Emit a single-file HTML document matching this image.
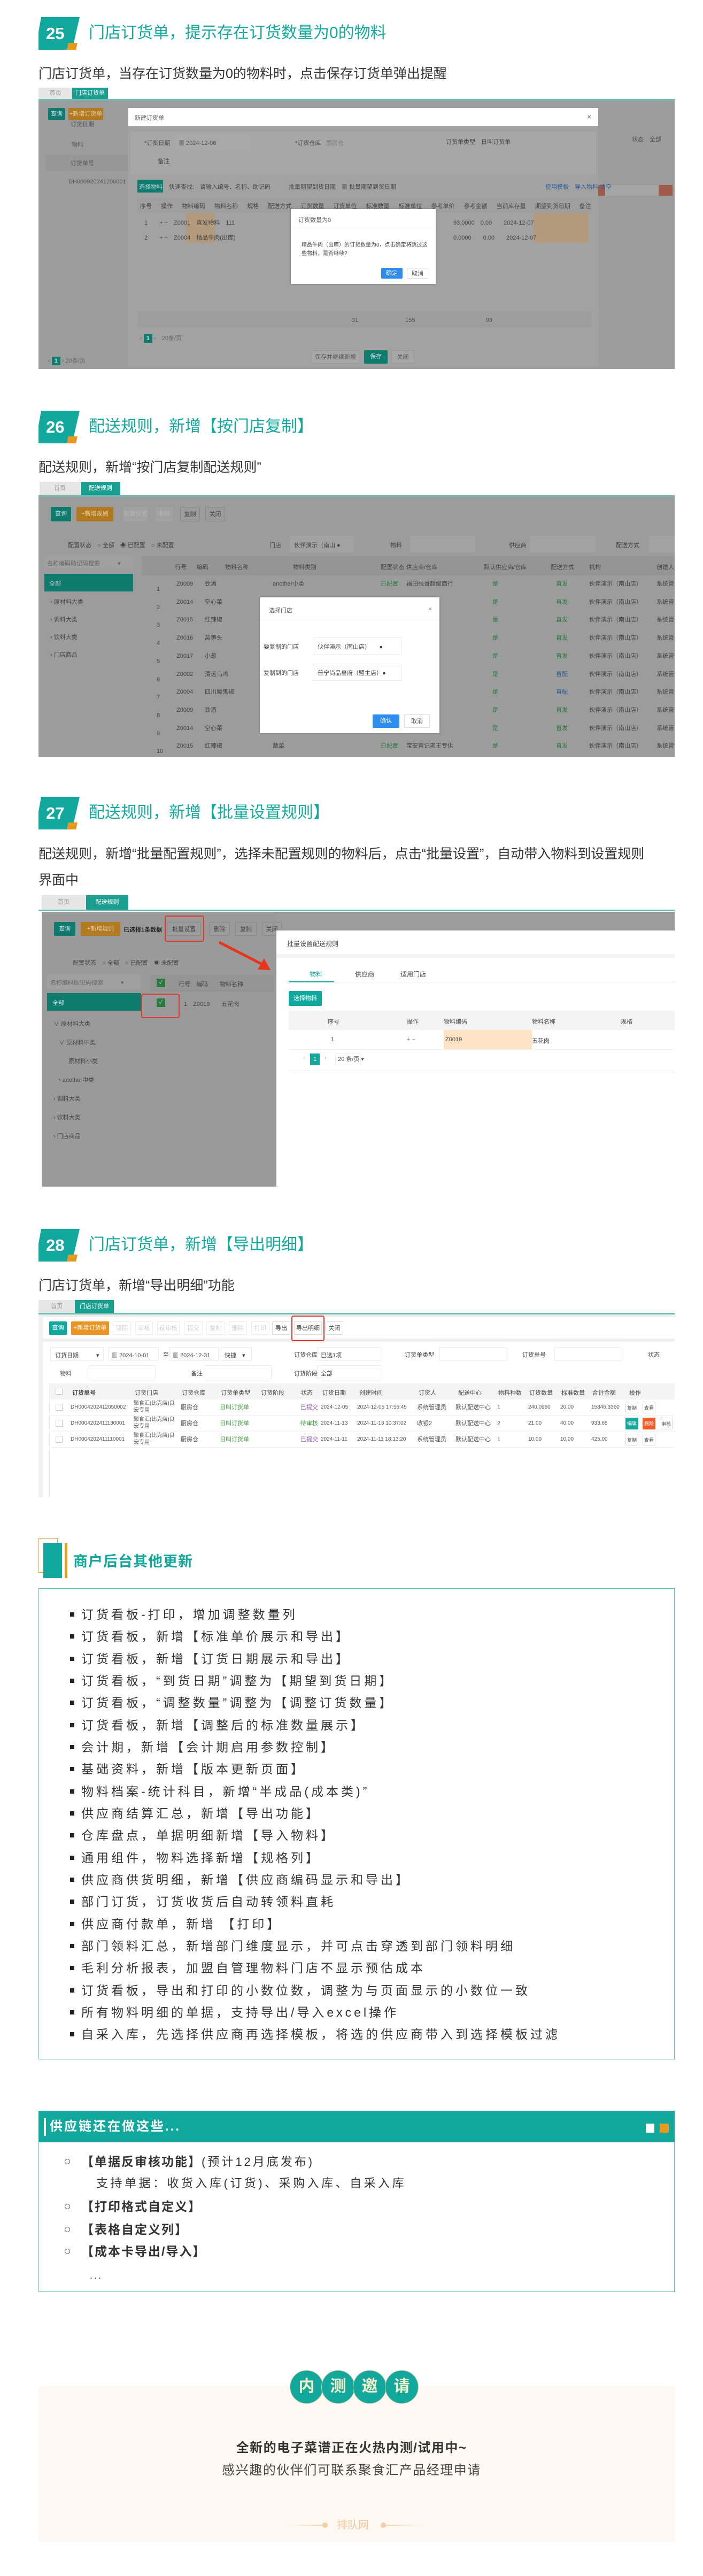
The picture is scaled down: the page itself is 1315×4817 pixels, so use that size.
<!DOCTYPE html>
<html><head><meta charset="utf-8">
<style>
*{margin:0;padding:0;box-sizing:border-box}
body{width:1315px;height:4817px;position:relative;background:#fff;font-family:"Liberation Sans","Noto Sans CJK SC",sans-serif;color:#333;overflow:hidden}
.a{position:absolute}
.num{position:absolute;width:78px;height:62px}
.num span{position:absolute;left:14px;top:13px;font-size:31px;font-weight:bold;color:#fff;line-height:36px}
.ttl{position:absolute;left:166px;font-size:30px;color:#13a89e;line-height:40px;white-space:nowrap}
.sub{position:absolute;left:72px;font-size:25px;color:#333;line-height:34px;white-space:nowrap}
.shot{position:absolute;left:72px;width:1190px;overflow:hidden;font-size:11px;color:#333}
.shot div,.shot span{position:absolute;white-space:nowrap}
.tab{height:24px;line-height:24px;text-align:center;font-size:11px}
.b{height:22px;line-height:22px;text-align:center;font-size:11px;border-radius:2px}
.li{position:absolute;left:131px;font-size:23px;letter-spacing:5px;color:#333;line-height:40px;white-space:nowrap}
.li:before{content:"";position:absolute;left:0;top:16px;width:8px;height:8px;background:#222}
.li span{position:static;margin-left:21px}
.ci{position:absolute;width:63px;height:63px;border-radius:50%;background:#13a89e;border:1px solid #d9cf9e;color:#f5f0c8;font-size:30px;font-weight:bold;text-align:center;line-height:60px}
</style></head><body>

<!-- ===== 25 ===== -->
<svg class="num" style="left:72px;top:32px" viewBox="0 0 78 62"><polygon points="5,0 77,0 66,48 56,48 53,61 0,61 0,28" fill="#13a89e"/><polygon points="56,48 73,48 70,61 53,61" fill="#e8981a"/></svg>
<div class="num" style="left:72px;top:32px;background:none"><span>25</span></div>
<div class="ttl" style="top:42px">门店订货单，提示存在订货数量为0的物料</div>
<div class="sub" style="top:121px">门店订货单，当存在订货数量为0的物料时，点击保存订货单弹出提醒</div>

<div class="shot" style="top:164px;height:526px;background:#fff">
 <div class="tab" style="left:0;top:0;width:63px;height:21px;line-height:21px;background:#e6e6e6;color:#999">首页</div>
 <div class="tab" style="left:63px;top:0;width:67px;height:21px;line-height:21px;background:#1a9e8f;color:#fff">门店订货单</div>
 <div style="left:0;top:21px;width:1190px;height:3px;background:#6cbcb2"></div>
 <div style="left:0;top:24px;width:1190px;height:502px;background:#9c9c9c"></div>
 <div class="b" style="left:18px;top:38px;width:32px;background:#0f7a6e;color:#cde">查询</div>
 <div class="b" style="left:56px;top:38px;width:65px;background:#b27a1f;color:#e8d0a8">+新增订货单</div>
 <div style="left:60px;top:60px;color:#555">订货日期</div>
 <div style="left:62px;top:98px;color:#555">物料</div>
 <div style="left:14px;top:126px;width:160px;height:30px;background:#979797"></div>
 <div style="left:60px;top:133px;color:#555">订货单号</div>
 <div style="left:56px;top:170px;color:#555">DH000920241206001</div>
 <div style="left:1110px;top:88px;color:#555">状态　全部</div>
 <div style="left:1046px;top:182px;width:140px;height:20px;background:#a05a4a"></div>
 <div style="left:1060px;top:182px;width:100px;height:20px;background:#a5a5a5"></div>
 <div style="left:18px;top:502px;color:#666">‹ <b style="background:#0f7a6e;color:#cde;padding:2px 5px">1</b> › 20条/页</div>
 <!-- modal -->
 <div style="left:168px;top:38px;width:879px;height:484px;background:#a2a2a2">
  <div style="left:0;top:0;width:879px;height:34px;background:#fff"></div>
  <div style="left:12px;top:10px;color:#555">新建订货单</div>
  <div style="left:858px;top:8px;color:#666;font-size:14px">×</div>
  <div style="left:4px;top:44px;width:871px;height:80px;background:#a7a7a7"></div>
  <div style="left:30px;top:57px;color:#444">*订货日期</div>
  <div style="left:88px;top:50px;width:140px;height:28px;background:#a9a9a9"></div>
  <div style="left:94px;top:57px;color:#555">▥ 2024-12-06</div>
  <div style="left:312px;top:57px;color:#444">*订货仓库</div>
  <div style="left:370px;top:57px;color:#777">厨房仓</div>
  <div style="left:594px;top:55px;color:#444">订货单类型　日叫订货单</div>
  <div style="left:55px;top:91px;color:#444">备注</div>
  <div style="left:17px;top:134px;width:48px;height:24px;background:#0f7a6e"></div>
  <div style="left:20px;top:139px;color:#bdd">选择物料</div>
  <div style="left:76px;top:139px;color:#444">快速查找:　请输入编号、名称、助记码</div>
  <div style="left:300px;top:139px;color:#444">批量期望到货日期　▥ 批量期望到货日期</div>
  <div style="left:780px;top:139px;color:#2e5f98">使用模板　导入物料 清空</div>
  <div style="left:17px;top:168px;width:850px;height:28px;background:#9f9f9f"></div>
  <div style="left:22px;top:175px;color:#444;word-spacing:14px">序号 操作 物料编码 物料名称 规格 配送方式 订货数量 订货单位 标准数量 标准单位 参考单价 参考金额 当前库存量 期望到货日期 备注</div>
  <div style="left:108px;top:196px;width:54px;height:56px;background:#b49a7c"></div>
  <div style="left:758px;top:196px;width:102px;height:56px;background:#b49a7c"></div>
  <div style="left:30px;top:206px;color:#444">1　　+ −　Z0001　直发物料　111</div>
  <div style="left:30px;top:234px;color:#444">2　　+ −　Z0004　精品牛肉(出库)</div>
  <div style="left:608px;top:206px;color:#444">93.0000　0.00　　2024-12-07</div>
  <div style="left:608px;top:234px;color:#444">0.0000　　0.00　　2024-12-07</div>
  <div style="left:17px;top:380px;width:850px;height:30px;background:#9e9e9e"></div>
  <div style="left:418px;top:388px;color:#555">31　　　　　　　　155　　　　　　　　　　　　93</div>
  <div style="left:22px;top:422px;color:#666">‹ <b style="background:#0f7a6e;color:#cde;padding:2px 5px">1</b> ›　20条/页</div>
  <div class="b" style="left:343px;top:453px;width:89px;height:25px;line-height:25px;background:#a7a7a7;border:1px solid #999;color:#555">保存并继续新增</div>
  <div class="b" style="left:441px;top:453px;width:44px;height:25px;line-height:25px;background:#0f7a6e;color:#cde">保存</div>
  <div class="b" style="left:492px;top:453px;width:43px;height:25px;line-height:25px;background:#a7a7a7;border:1px solid #999;color:#555">关闭</div>
 </div>
 <!-- confirm -->
 <div style="left:472px;top:227px;width:271px;height:140px;background:#fff;box-shadow:0 0 4px rgba(0,0,0,.3)">
  <div style="left:14px;top:12px;color:#555">订货数量为0</div>
  <div style="left:0;top:33px;width:271px;height:1px;background:#eee"></div>
  <div style="left:20px;top:58px;color:#444;font-size:10px">精品牛肉（出库）的订货数量为0，点击确定将跳过这</div>
  <div style="left:20px;top:74px;color:#444;font-size:10px">些物料，是否继续?</div>
  <div class="b" style="left:169px;top:110px;width:40px;height:20px;line-height:20px;background:#2d8cf0;color:#fff">确定</div>
  <div class="b" style="left:217px;top:110px;width:40px;height:20px;line-height:20px;border:1px solid #ddd;color:#555">取消</div>
 </div>
</div>

<!-- ===== 26 ===== -->
<svg class="num" style="left:72px;top:768px" viewBox="0 0 78 62"><polygon points="5,0 77,0 66,48 56,48 53,61 0,61 0,28" fill="#13a89e"/><polygon points="56,48 73,48 70,61 53,61" fill="#e8981a"/></svg>
<div class="num" style="left:72px;top:768px"><span>26</span></div>
<div class="ttl" style="top:778px">配送规则，新增【按门店复制】</div>
<div class="sub" style="top:857px">配送规则，新增“按门店复制配送规则”</div>

<div class="shot" style="top:901px;height:515px;background:#fff">
 <div class="tab" style="left:2px;top:0;width:76px;height:25px;background:#e6e6e6;color:#999">首页</div>
 <div class="tab" style="left:79px;top:0;width:74px;height:25px;background:#1a9e8f;color:#fff">配送规则</div>
 <div style="left:0;top:25px;width:1190px;height:3px;background:#6cbcb2"></div>
 <div style="left:0;top:28px;width:1190px;height:487px;background:#9c9c9c"></div>
 <div class="b" style="left:23px;top:47px;width:38px;height:27px;line-height:27px;background:#0f7a6e;color:#cde">查询</div>
 <div class="b" style="left:71px;top:47px;width:69px;height:27px;line-height:27px;background:#b27a1f;color:#e8d0a8">+新增规则</div>
 <div class="b" style="left:158px;top:47px;width:47px;height:27px;line-height:27px;background:#a1a1a1;color:#b5b5b5">批量设置</div>
 <div class="b" style="left:218px;top:47px;width:34px;height:27px;line-height:27px;background:#a1a1a1;color:#b5b5b5">删除</div>
 <div class="b" style="left:265px;top:47px;width:37px;height:27px;line-height:27px;border:1px solid #888;color:#444">复制</div>
 <div class="b" style="left:312px;top:47px;width:37px;height:27px;line-height:27px;border:1px solid #888;color:#444">关闭</div>
 <div style="left:55px;top:110px;color:#444">配置状态　○ 全部　◉ 已配置　○ 未配置</div>
 <div style="left:432px;top:110px;color:#444">门店</div>
 <div style="left:470px;top:100px;width:120px;height:32px;background:#a2a2a2"></div>
 <div style="left:478px;top:110px;color:#444">伙伴演示（南山 ●</div>
 <div style="left:658px;top:110px;color:#444">物料</div>
 <div style="left:695px;top:100px;width:122px;height:32px;background:#a2a2a2"></div>
 <div style="left:880px;top:110px;color:#444">供应商</div>
 <div style="left:920px;top:100px;width:122px;height:32px;background:#a2a2a2"></div>
 <div style="left:1080px;top:110px;color:#444">配送方式</div>
 <div style="left:1142px;top:100px;width:48px;height:32px;background:#a2a2a2"></div>
 <div style="left:11px;top:138px;width:165px;height:24px;background:#a0a0a0"></div>
 <div style="left:16px;top:144px;color:#666">名称编码助记码搜索　　　▾</div>
 <div style="left:11px;top:172px;width:166px;height:33px;background:#0f7a6e"></div>
 <div style="left:20px;top:182px;color:#cde">全部</div>
 <div style="left:22px;top:216px;color:#444">› 原材料大类</div>
 <div style="left:22px;top:249px;color:#444">› 调料大类</div>
 <div style="left:22px;top:282px;color:#444">› 饮料大类</div>
 <div style="left:22px;top:315px;color:#444">› 门店商品</div>
 <div style="left:193px;top:139px;width:997px;height:36px;background:#959595"></div>
 <div style="left:255px;top:151px;color:#444">行号</div><div style="left:296px;top:151px;color:#444">编码</div><div style="left:349px;top:151px;color:#444">物料名称</div><div style="left:476px;top:151px;color:#444">物料类别</div><div style="left:640px;top:151px;color:#444">配置状态</div><div style="left:688px;top:151px;color:#444">供应商/仓库</div><div style="left:833px;top:151px;color:#444">默认供应商/仓库</div><div style="left:958px;top:151px;color:#444">配送方式</div><div style="left:1030px;top:151px;color:#444">机构</div><div style="left:1156px;top:151px;color:#444">创建人</div>
</div>
<div class="shot" id="t26" style="top:1076px;height:340px;left:72px"></div>

<!-- ===== 27 ===== -->
<svg class="num" style="left:72px;top:1490px" viewBox="0 0 78 62"><polygon points="5,0 77,0 66,48 56,48 53,61 0,61 0,28" fill="#13a89e"/><polygon points="56,48 73,48 70,61 53,61" fill="#e8981a"/></svg>
<div class="num" style="left:72px;top:1490px"><span>27</span></div>
<div class="ttl" style="top:1500px">配送规则，新增【批量设置规则】</div>
<div class="sub" style="top:1580px">配送规则，新增“批量配置规则”，选择未配置规则的物料后，点击“批量设置”，自动带入物料到设置规则</div>
<div class="sub" style="top:1629px">界面中</div>

<div class="shot" style="top:1674px;height:545px;background:#fff">
 <div class="tab" style="left:6px;top:0;width:82px;height:27px;line-height:27px;background:#e6e6e6;color:#999">首页</div>
 <div class="tab" style="left:89px;top:0;width:79px;height:27px;line-height:27px;background:#1a9e8f;color:#fff">配送规则</div>
 <div style="left:0;top:27px;width:1190px;height:3px;background:#6cbcb2"></div>
 <div style="left:6px;top:31px;width:1184px;height:514px;background:#9c9c9c"></div>
 <div style="left:6px;top:31px;width:439px;height:514px;background:#9a9a9a"></div>
 <div class="b" style="left:29px;top:50px;width:40px;height:26px;line-height:26px;background:#0f7a6e;color:#cde">查询</div>
 <div class="b" style="left:79px;top:50px;width:74px;height:26px;line-height:26px;background:#b27a1f;color:#e8d0a8">+新增规则</div>
 <div style="left:159px;top:56px;color:#222;font-weight:bold">已选择1条数据</div>
 <div class="b" style="left:240px;top:50px;width:64px;height:26px;line-height:26px;border:1px solid #888;color:#444">批量设置</div>
 <div class="b" style="left:319px;top:50px;width:39px;height:26px;line-height:26px;border:1px solid #888;color:#444">删除</div>
 <div class="b" style="left:368px;top:50px;width:40px;height:26px;line-height:26px;border:1px solid #888;color:#444">复制</div>
 <div class="b" style="left:418px;top:50px;width:37px;height:26px;line-height:26px;border:1px solid #888;color:#444">关闭</div>
 <div style="left:236px;top:38px;width:74px;height:49px;border:2px solid #e0392b;border-radius:4px"></div>
 <div style="left:64px;top:118px;color:#444">配置状态　○ 全部　○ 已配置　◉ 未配置</div>
 <div style="left:16px;top:148px;width:175px;height:28px;background:#a0a0a0"></div>
 <div style="left:22px;top:155px;color:#666">名称编码助记码搜索　　　▾</div>
 <div style="left:16px;top:183px;width:176px;height:33px;background:#0f7a6e"></div>
 <div style="left:26px;top:193px;color:#cde">全部</div>
 <div style="left:28px;top:232px;color:#444">∨ 原材料大类</div>
 <div style="left:38px;top:267px;color:#444">∨ 原材料中类</div>
 <div style="left:56px;top:302px;color:#444">原材料小类</div>
 <div style="left:38px;top:337px;color:#444">› another中类</div>
 <div style="left:28px;top:372px;color:#444">› 调料大类</div>
 <div style="left:28px;top:407px;color:#444">› 饮料大类</div>
 <div style="left:28px;top:442px;color:#444">› 门店商品</div>
 <div style="left:208px;top:149px;width:237px;height:32px;background:#959595"></div>
 <div style="left:221px;top:156px;width:16px;height:16px;background:#2a7a40;color:#ccc;font-size:10px;text-align:center;line-height:16px">✓</div>
 <div style="left:262px;top:158px;color:#444">行号　编码　　物料名称</div>
 <div style="left:221px;top:193px;width:16px;height:16px;background:#2a7a40;color:#ccc;font-size:10px;text-align:center;line-height:16px">✓</div>
 <div style="left:272px;top:195px;color:#444">1　Z0019　　五花肉</div>
 <div style="left:192px;top:184px;width:72px;height:46px;border:2px solid #e0392b;border-radius:4px"></div>
 <svg style="position:absolute;left:330px;top:82px" width="112" height="64"><line x1="8" y1="6" x2="90" y2="48" stroke="#e8341c" stroke-width="5"/><polygon points="104,58 80,57 92,36" fill="#e8341c"/></svg>
 <div style="left:445px;top:66px;width:745px;height:479px;background:#fff">
  <div style="left:20px;top:16px;color:#444;font-size:12px">批量设置配送规则</div>
  <div style="left:0;top:44px;width:745px;height:8px;background:#f3f3f3"></div>
  <div style="left:62px;top:73px;color:#13a89e;font-size:12px">物料</div>
  <div style="left:147px;top:73px;color:#444;font-size:12px">供应商</div>
  <div style="left:232px;top:73px;color:#444;font-size:12px">适用门店</div>
  <div style="left:23px;top:96px;width:722px;height:1px;background:#e8e8e8"></div>
  <div style="left:23px;top:95px;width:85px;height:2px;background:#13a89e"></div>
  <div class="b" style="left:23px;top:113px;width:62px;height:28px;line-height:28px;background:#13a89e;color:#fff">选择物料</div>
  <div style="left:23px;top:150px;width:722px;height:36px;background:#f4f4f4"></div>
  <div style="left:96px;top:162px;color:#444">序号</div><div style="left:244px;top:162px;color:#444">操作</div><div style="left:313px;top:162px;color:#444">物料编码</div><div style="left:478px;top:162px;color:#444">物料名称</div><div style="left:644px;top:162px;color:#444">规格</div>
  <div style="left:313px;top:186px;width:165px;height:36px;background:#fde2c4"></div>
  <div style="left:102px;top:198px;color:#444">1</div><div style="left:244px;top:198px;color:#888">+ −</div><div style="left:316px;top:198px;color:#444">Z0019</div><div style="left:478px;top:198px;color:#444">五花肉</div>
  <div style="left:23px;top:222px;width:722px;height:1px;background:#eee"></div>
  <div style="left:50px;top:232px;color:#aaa">‹</div>
  <div style="left:63px;top:230px;width:18px;height:22px;background:#13a89e;color:#fff;text-align:center;line-height:22px">1</div>
  <div style="left:90px;top:232px;color:#aaa">›</div>
  <div style="left:110px;top:230px;width:48px;height:22px;border:1px solid #eee;color:#555;line-height:20px;padding-left:4px">20 条/页 ▾</div>
  <div style="left:23px;top:262px;width:722px;height:1px;background:#e8e8e8"></div>
 </div>
</div>

<!-- ===== 28 ===== -->
<svg class="num" style="left:72px;top:2298px" viewBox="0 0 78 62"><polygon points="5,0 77,0 66,48 56,48 53,61 0,61 0,28" fill="#13a89e"/><polygon points="56,48 73,48 70,61 53,61" fill="#e8981a"/></svg>
<div class="num" style="left:72px;top:2298px"><span>28</span></div>
<div class="ttl" style="top:2308px">门店订货单，新增【导出明细】</div>
<div class="sub" style="top:2387px">门店订货单，新增“导出明细”功能</div>

<div class="shot" style="top:2431px;height:369px;background:#f0f0f0">
 <div class="tab" style="left:0;top:0;width:68px;height:24px;background:#e6e6e6;color:#999">首页</div>
 <div class="tab" style="left:68px;top:0;width:73px;height:24px;background:#1a9e8f;color:#fff">门店订货单</div>
 <div style="left:141px;top:0;width:1049px;height:24px;background:#fff"></div>
 <div style="left:0;top:24px;width:1190px;height:3px;background:#6cbcb2"></div>
 <div style="left:8px;top:32px;width:1182px;height:40px;background:#fff"></div>
 <div class="b" style="left:20px;top:40px;width:33px;height:25px;line-height:25px;background:#13a89e;color:#fff">查询</div>
 <div class="b" style="left:61px;top:40px;width:71px;height:25px;line-height:25px;background:#ea9424;color:#fff">+新增订货单</div>
 <div class="b" style="left:139px;top:40px;width:34px;height:25px;line-height:25px;border:1px solid #eee;color:#ccc">驳回</div>
 <div class="b" style="left:181px;top:40px;width:33px;height:25px;line-height:25px;border:1px solid #eee;color:#ccc">审核</div>
 <div class="b" style="left:222px;top:40px;width:42px;height:25px;line-height:25px;border:1px solid #eee;color:#ccc">反审核</div>
 <div class="b" style="left:272px;top:40px;width:35px;height:25px;line-height:25px;border:1px solid #eee;color:#ccc">提交</div>
 <div class="b" style="left:314px;top:40px;width:35px;height:25px;line-height:25px;border:1px solid #eee;color:#ccc">复制</div>
 <div class="b" style="left:356px;top:40px;width:34px;height:25px;line-height:25px;border:1px solid #eee;color:#ccc">删除</div>
 <div class="b" style="left:398px;top:40px;width:34px;height:25px;line-height:25px;border:1px solid #eee;color:#ccc">打印</div>
 <div class="b" style="left:437px;top:40px;width:34px;height:25px;line-height:25px;border:1px solid #ddd;color:#444">导出</div>
 <div class="b" style="left:478px;top:40px;width:52px;height:25px;line-height:25px;border:1px solid #ddd;color:#444">导出明细</div>
 <div class="b" style="left:537px;top:40px;width:33px;height:25px;line-height:25px;border:1px solid #ddd;color:#444">关闭</div>
 <div style="left:473px;top:29px;width:62px;height:48px;border:2px solid #e0392b;border-radius:4px"></div>
 <div style="left:8px;top:78px;width:1182px;height:291px;background:#fff"></div>
 <div style="left:22px;top:88px;width:100px;height:26px;border:1px solid #eee;padding:6px 8px;color:#444">订货日期　　　▾</div>
 <div style="left:130px;top:88px;width:95px;height:26px;border:1px solid #eee;padding:6px 6px;color:#444">▥ 2024-10-01</div>
 <div style="left:233px;top:94px;color:#444">至</div>
 <div style="left:244px;top:88px;width:93px;height:26px;border:1px solid #eee;padding:6px 6px;color:#444">▥ 2024-12-31</div>
 <div style="left:341px;top:88px;width:58px;height:26px;border:1px solid #eee;padding:6px 6px;color:#444">快捷　▾</div>
 <div style="left:478px;top:94px;color:#444">订货仓库</div>
 <div style="left:521px;top:88px;width:120px;height:26px;border:1px solid #eee;padding:6px 6px;color:#444">已选1项</div>
 <div style="left:685px;top:94px;color:#444">订货单类型</div>
 <div style="left:750px;top:88px;width:125px;height:26px;border:1px solid #eee"></div>
 <div style="left:905px;top:94px;color:#444">订货单号</div>
 <div style="left:965px;top:88px;width:125px;height:26px;border:1px solid #eee"></div>
 <div style="left:1140px;top:94px;color:#444">状态</div>
 <div style="left:40px;top:129px;color:#444">物料</div>
 <div style="left:94px;top:122px;width:125px;height:26px;border:1px solid #eee"></div>
 <div style="left:285px;top:129px;color:#444">备注</div>
 <div style="left:311px;top:122px;width:125px;height:26px;border:1px solid #eee"></div>
 <div style="left:478px;top:129px;color:#444">订货阶段</div>
 <div style="left:521px;top:122px;width:120px;height:26px;border:1px solid #eee;padding:6px 6px;color:#444">全部</div>
 <div style="left:20px;top:156px;width:1170px;height:30px;background:#f4f4f4"></div>
 <div style="left:20px;top:186px;width:1170px;height:90px;border-bottom:1px solid #eee"></div>
 <div style="left:20px;top:216px;width:1170px;height:1px;background:#eee"></div>
 <div style="left:20px;top:246px;width:1170px;height:1px;background:#eee"></div>
 <div style="left:20px;top:156px;width:1px;height:213px;background:#eee"></div>
</div>
<div class="shot" id="t28" style="top:2587px;height:120px"></div>

<!-- ===== Other updates ===== -->
<div class="a" style="left:72px;top:2876px;width:36px;height:65px;border:1px solid #e8a33c"></div>
<div class="a" style="left:81px;top:2885px;width:35px;height:66px;background:#13a89e"></div>
<div class="a" style="left:121px;top:2885px;width:5px;height:66px;background:#e8981a"></div>
<div class="a" style="left:137px;top:2898px;font-size:27px;font-weight:bold;color:#13a89e;letter-spacing:1px;white-space:nowrap">商户后台其他更新</div>
<div class="a" style="left:72px;top:2970px;width:1190px;height:881px;border:1px solid #5cbcb2"></div>
<div id="lst"></div>

<!-- ===== Supply chain ===== -->
<div class="a" style="left:72px;top:3947px;width:1190px;height:339px;border:1px solid #5cbcb2"></div>
<div class="a" style="left:72px;top:3947px;width:1190px;height:59px;background:#13a89e"></div>
<div class="a" style="left:82px;top:3961px;width:4px;height:33px;background:#fff"></div>
<div class="a" style="left:93px;top:3961px;font-size:24px;font-weight:bold;color:#fff;letter-spacing:3px;white-space:nowrap;line-height:32px">供应链还在做这些...</div>
<div class="a" style="left:1208px;top:3971px;width:16px;height:17px;background:#fff"></div>
<div class="a" style="left:1234px;top:3971px;width:17px;height:17px;background:#e8981a"></div>
<div class="a" style="left:121px;top:4037px;width:10px;height:10px;border:1px solid #555;border-radius:50%"></div>
<div class="a" style="left:152px;top:4024px;font-size:23px;letter-spacing:2px;white-space:nowrap;line-height:36px;color:#333"><b>【单据反审核功能】</b><span style="letter-spacing:4px;font-size:22px">(预计12月底发布)</span></div>
<div class="a" style="left:180px;top:4065px;font-size:22px;letter-spacing:4.5px;white-space:nowrap;line-height:36px;color:#333">支持单据：收货入库(订货)、采购入库、自采入库</div>
<div class="a" style="left:121px;top:4121px;width:10px;height:10px;border:1px solid #555;border-radius:50%"></div>
<div class="a" style="left:152px;top:4108px;font-size:23px;letter-spacing:2px;font-weight:bold;white-space:nowrap;line-height:36px">【打印格式自定义】</div>
<div class="a" style="left:121px;top:4164px;width:10px;height:10px;border:1px solid #555;border-radius:50%"></div>
<div class="a" style="left:152px;top:4151px;font-size:23px;letter-spacing:2px;font-weight:bold;white-space:nowrap;line-height:36px">【表格自定义列】</div>
<div class="a" style="left:121px;top:4205px;width:10px;height:10px;border:1px solid #555;border-radius:50%"></div>
<div class="a" style="left:152px;top:4192px;font-size:23px;letter-spacing:2px;font-weight:bold;white-space:nowrap;line-height:36px">【成本卡导出/导入】</div>
<div class="a" style="left:168px;top:4240px;font-size:18px;letter-spacing:3px;line-height:30px">...</div>

<!-- ===== Invite ===== -->
<div class="a" style="left:72px;top:4462px;width:1190px;height:291px;background:#fdf8f2"></div>
<div class="ci" style="left:542px;top:4432px">内</div>
<div class="ci" style="left:601px;top:4432px">测</div>
<div class="ci" style="left:660px;top:4432px">邀</div>
<div class="ci" style="left:720px;top:4432px">请</div>
<div class="a" style="left:0;width:1315px;top:4562px;text-align:center;font-size:24px;font-weight:bold;letter-spacing:1.5px;color:#333;line-height:32px">全新的电子菜谱正在火热内测/试用中~</div>
<div class="a" style="left:0;width:1315px;top:4604px;text-align:center;font-size:24px;letter-spacing:1.5px;color:#444;line-height:32px">感兴趣的伙伴们可联系聚食汇产品经理申请</div>
<div class="a" style="left:540px;top:4721px;width:68px;height:2px;background:linear-gradient(90deg,#fdf8f2,#f3cfa3)"></div>
<div class="a" style="left:603px;top:4717px;width:10px;height:10px;border-radius:50%;background:#f3cfa3"></div>
<div class="a" style="left:630px;top:4708px;font-size:20px;color:#f0c99c;line-height:28px">排队网</div>
<div class="a" style="left:712px;top:4717px;width:10px;height:10px;border-radius:50%;background:#f3cfa3"></div>
<div class="a" style="left:717px;top:4721px;width:73px;height:2px;background:linear-gradient(90deg,#f3cfa3,#fdf8f2)"></div>

<!-- static content for table 26 rows -->
<div class="shot" style="top:1076px;height:340px">
 <div style="left:193px;top:0;width:997px;height:340px">
  <div style="left:28px;top:10px;color:#444;line-height:33.7px;white-space:pre">1
2
3
4
5
6
7
8
9
10</div>
  <div style="left:65px;top:0;color:#444;line-height:33.7px;white-space:pre">Z0009
Z0014
Z0015
Z0016
Z0017
Z0002
Z0004
Z0009
Z0014
Z0015</div>
  <div style="left:118px;top:0;color:#444;line-height:33.7px;white-space:pre">劲酒
空心菜
红辣椒
莴笋头
小葱
清远乌鸡
四川魔鬼椒
劲酒
空心菜
红辣椒</div>
  <div style="left:245px;top:0;color:#444;line-height:33.7px">another小类</div>
  <div style="left:245px;top:303px;color:#444;line-height:33.7px">蔬菜</div>
  <div style="left:447px;top:0;color:#2a7a40;line-height:33.7px;white-space:pre">已配置</div>
  <div style="left:447px;top:303px;color:#2a7a40;line-height:33.7px">已配置</div>
  <div style="left:495px;top:0;color:#444;line-height:33.7px">福田强哥超级商行</div>
  <div style="left:495px;top:303px;color:#444;line-height:33.7px">宝安黄记老王专供</div>
  <div style="left:656px;top:0;color:#2a7a40;line-height:33.7px;white-space:pre">是
是
是
是
是
是
是
是
是
是</div>
  <div style="left:775px;top:0;color:#2a7a40;line-height:33.7px;white-space:pre">直发
直发
直发
直发
直发
<span style="position:static;color:#2e5f98">直配</span>
<span style="position:static;color:#2e5f98">直配</span>
直发
直发
直发</div>
  <div style="left:837px;top:0;color:#444;line-height:33.7px;white-space:pre">伙伴演示（南山店）
伙伴演示（南山店）
伙伴演示（南山店）
伙伴演示（南山店）
伙伴演示（南山店）
伙伴演示（南山店）
伙伴演示（南山店）
伙伴演示（南山店）
伙伴演示（南山店）
伙伴演示（南山店）</div>
  <div style="left:963px;top:0;color:#444;line-height:33.7px;white-space:pre">系统管
系统管
系统管
系统管
系统管
系统管
系统管
系统管
系统管
系统管</div>
 </div>
 <!-- dialog -->
 <div style="left:414px;top:41px;width:336px;height:254px;background:#fff;box-shadow:0 0 4px rgba(0,0,0,.3)">
  <div style="left:17px;top:16px;color:#555">选择门店</div>
  <div style="left:315px;top:14px;color:#999;font-size:13px">×</div>
  <div style="left:0;top:42px;width:336px;height:1px;background:#eee"></div>
  <div style="left:7px;top:84px;color:#444">要复制的门店</div>
  <div style="left:99px;top:75px;width:167px;height:32px;border:1px solid #eee;padding:8px 8px;color:#444">伙伴演示（南山店）　　●</div>
  <div style="left:7px;top:133px;color:#444">复制到的门店</div>
  <div style="left:99px;top:124px;width:167px;height:32px;border:1px solid #eee;padding:8px 8px;color:#444">普宁尚品皇府（盟主店）●</div>
  <div class="b" style="left:211px;top:219px;width:50px;height:25px;line-height:25px;background:#2d8cf0;color:#fff">确认</div>
  <div class="b" style="left:270px;top:219px;width:48px;height:25px;line-height:25px;border:1px solid #ddd;color:#555">取消</div>
 </div>
</div>

<!-- table 28 text -->
<div class="shot" style="top:2587px;height:120px">
 <div style="left:32px;top:8px;width:13px;height:13px;border:1px solid #ccc;background:#fff"></div>
 <div style="left:63px;top:9px;color:#444;font-weight:bold">订货单号</div><div style="left:180px;top:9px;color:#444">订货门店</div><div style="left:268px;top:9px;color:#444">订货仓库</div><div style="left:341px;top:9px;color:#444">订货单类型</div><div style="left:416px;top:9px;color:#444">订货阶段</div><div style="left:491px;top:9px;color:#444">状态</div><div style="left:531px;top:9px;color:#444">订货日期</div><div style="left:600px;top:9px;color:#444">创建时间</div><div style="left:711px;top:9px;color:#444">订货人</div><div style="left:785px;top:9px;color:#444">配送中心</div><div style="left:860px;top:9px;color:#444">物料种数</div><div style="left:918px;top:9px;color:#444">订货数量</div><div style="left:978px;top:9px;color:#444">标准数量</div><div style="left:1036px;top:9px;color:#444">合计金额</div><div style="left:1105px;top:9px;color:#444">操作</div>
 <div style="left:32px;top:38px;width:13px;height:13px;border:1px solid #ccc"></div>
 <div style="left:32px;top:68px;width:13px;height:13px;border:1px solid #ccc"></div>
 <div style="left:32px;top:98px;width:13px;height:13px;border:1px solid #ccc"></div>
 <div style="left:60px;top:38px;color:#555;line-height:30px;top:30px;white-space:pre;font-size:10px">DH0004202412050002
DH0004202411130001
DH0004202411110001</div>
 <div style="left:178px;top:31px;color:#555;font-size:10px;line-height:13px;white-space:pre">聚食汇(比克店)良
宏专用</div>
 <div style="left:178px;top:61px;color:#555;font-size:10px;line-height:13px;white-space:pre">聚食汇(比克店)良
宏专用</div>
 <div style="left:178px;top:91px;color:#555;font-size:10px;line-height:13px;white-space:pre">聚食汇(比克店)良
宏专用</div>
 <div style="left:266px;top:30px;color:#555;line-height:30px;white-space:pre">厨房仓
厨房仓
厨房仓</div>
 <div style="left:339px;top:30px;color:#3a9a3a;line-height:30px;white-space:pre">日叫订货单
日叫订货单
日叫订货单</div>
 <div style="left:490px;top:30px;color:#9b59b6;line-height:30px;white-space:pre">已提交
<span style="position:static;color:#3a9a3a">待审核</span>
已提交</div>
 <div style="left:528px;top:30px;color:#555;line-height:30px;white-space:pre;font-size:10px">2024-12-05
2024-11-13
2024-11-11</div>
 <div style="left:596px;top:30px;color:#555;line-height:30px;white-space:pre;font-size:10px">2024-12-05 17:56:45
2024-11-13 10:37:02
2024-11-11 18:13:20</div>
 <div style="left:708px;top:30px;color:#555;line-height:30px;white-space:pre">系统管理员
收银2
系统管理员</div>
 <div style="left:780px;top:30px;color:#555;line-height:30px;white-space:pre">默认配送中心
默认配送中心
默认配送中心</div>
 <div style="left:858px;top:30px;color:#555;line-height:30px;white-space:pre">1
2
1</div>
 <div style="left:916px;top:30px;color:#555;line-height:30px;white-space:pre;font-size:10px">240.0960
21.00
10.00</div>
 <div style="left:976px;top:30px;color:#555;line-height:30px;white-space:pre;font-size:10px">20.00
40.00
10.00</div>
 <div style="left:1034px;top:30px;color:#555;line-height:30px;white-space:pre;font-size:10px">15846.3360
933.65
425.00</div>
 <div class="b" style="left:1098px;top:34px;width:24px;height:22px;border:1px solid #ddd;color:#555;font-size:9px">复制</div>
 <div class="b" style="left:1130px;top:34px;width:24px;height:22px;border:1px solid #ddd;color:#555;font-size:9px">查看</div>
 <div class="b" style="left:1098px;top:64px;width:24px;height:22px;background:#13a89e;color:#fff;font-size:9px">编辑</div>
 <div class="b" style="left:1130px;top:64px;width:24px;height:22px;background:#f05a28;color:#fff;font-size:9px">删除</div>
 <div class="b" style="left:1162px;top:64px;width:24px;height:22px;border:1px solid #ddd;color:#555;font-size:9px">审核</div>
 <div class="b" style="left:1098px;top:94px;width:24px;height:22px;border:1px solid #ddd;color:#555;font-size:9px">复制</div>
 <div class="b" style="left:1130px;top:94px;width:24px;height:22px;border:1px solid #ddd;color:#555;font-size:9px">查看</div>
</div>

<!-- list items -->
<div class="li" style="top:2999px"><span>订货看板-打印，增加调整数量列</span></div>
<div class="li" style="top:3040px"><span>订货看板，新增【标准单价展示和导出】</span></div>
<div class="li" style="top:3082px"><span>订货看板，新增【订货日期展示和导出】</span></div>
<div class="li" style="top:3123px"><span>订货看板，“到货日期”调整为【期望到货日期】</span></div>
<div class="li" style="top:3164px"><span>订货看板，“调整数量”调整为【调整订货数量】</span></div>
<div class="li" style="top:3206px"><span>订货看板，新增【调整后的标准数量展示】</span></div>
<div class="li" style="top:3247px"><span>会计期，新增【会计期启用参数控制】</span></div>
<div class="li" style="top:3288px"><span>基础资料，新增【版本更新页面】</span></div>
<div class="li" style="top:3330px"><span>物料档案-统计科目，新增“半成品(成本类)”</span></div>
<div class="li" style="top:3371px"><span>供应商结算汇总，新增【导出功能】</span></div>
<div class="li" style="top:3412px"><span>仓库盘点，单据明细新增【导入物料】</span></div>
<div class="li" style="top:3454px"><span>通用组件，物料选择新增【规格列】</span></div>
<div class="li" style="top:3495px"><span>供应商供货明细，新增【供应商编码显示和导出】</span></div>
<div class="li" style="top:3536px"><span>部门订货，订货收货后自动转领料直耗</span></div>
<div class="li" style="top:3578px"><span>供应商付款单，新增 【打印】</span></div>
<div class="li" style="top:3619px"><span>部门领料汇总，新增部门维度显示，并可点击穿透到部门领料明细</span></div>
<div class="li" style="top:3660px"><span>毛利分析报表，加盟自管理物料门店不显示预估成本</span></div>
<div class="li" style="top:3702px"><span>订货看板，导出和打印的小数位数，调整为与页面显示的小数位一致</span></div>
<div class="li" style="top:3743px"><span>所有物料明细的单据，支持导出/导入excel操作</span></div>
<div class="li" style="top:3784px"><span>自采入库，先选择供应商再选择模板，将选的供应商带入到选择模板过滤</span></div>

</body></html>
